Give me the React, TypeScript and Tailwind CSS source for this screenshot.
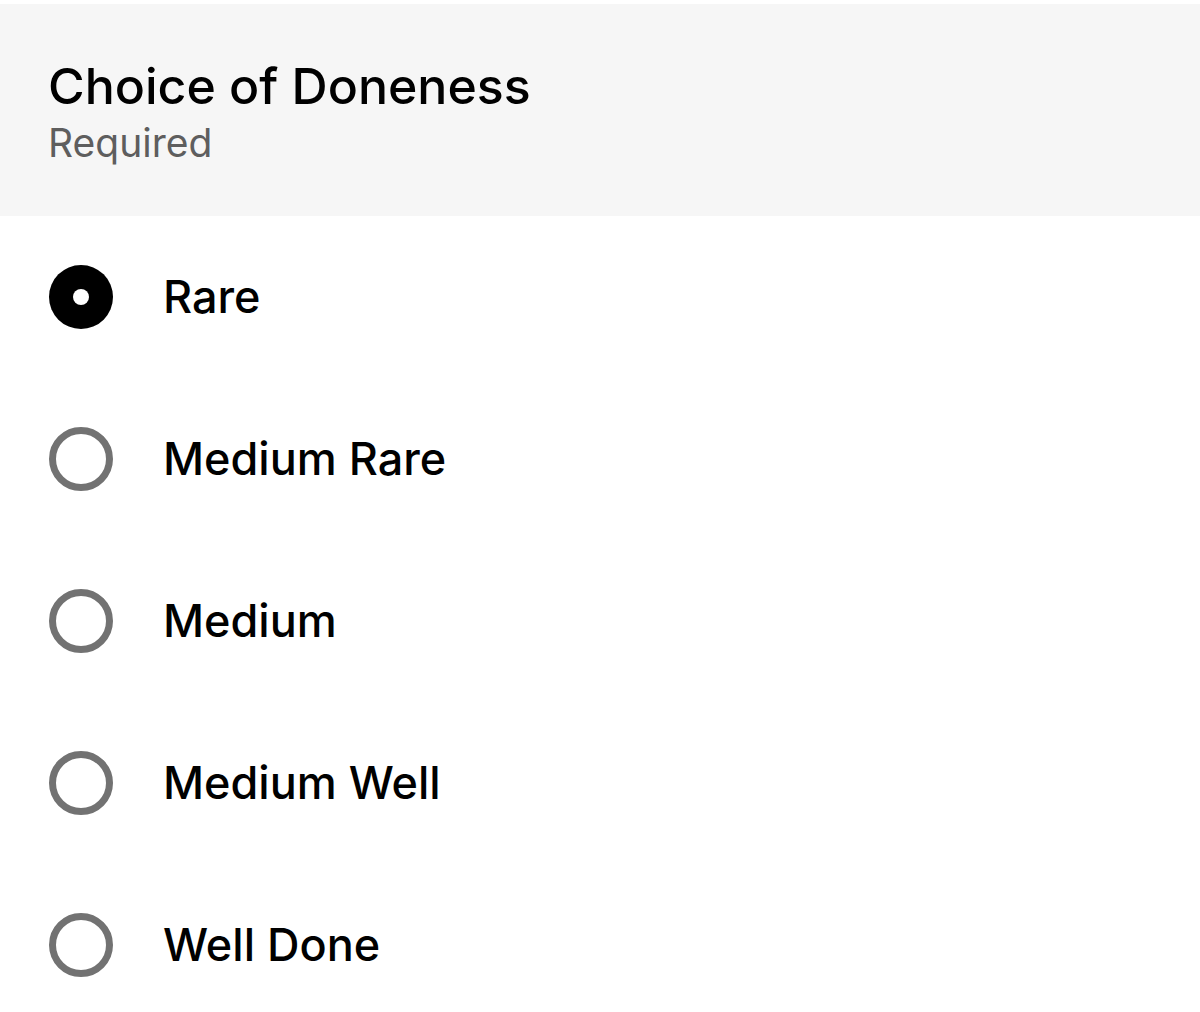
import React from "react";

const options = ["Rare", "Medium Rare", "Medium", "Medium Well", "Well Done"];

export default function App() {
  return (
    <div className="w-[1200px] h-[1012px] bg-white overflow-hidden pt-[4px]" style={{ fontFamily: "Inter, 'Noto Sans', sans-serif" }}>
      <div className="h-[212px] bg-[#f6f6f6] pl-[48px] pt-[53px]">
        <div className="text-[50px] leading-[58px] font-medium text-black">Choice of Doneness</div>
        <div className="text-[39px] leading-[46px] text-[#5e5e5e] mt-[5px]">Required</div>
      </div>
      <div className="flex flex-col">
        {options.map((o, i) => (
          <div key={o} className="flex items-center h-[162px] shrink-0 pl-[49px]">
            {i === 0 ? (
              <div className="w-[64px] h-[64px] rounded-full bg-black flex items-center justify-center shrink-0">
                <div className="w-[16px] h-[16px] rounded-full bg-white" />
              </div>
            ) : (
              <div className="w-[64px] h-[64px] rounded-full border-[7px] border-[#727272] shrink-0" />
            )}
            <div className="ml-[50px] text-[45px] leading-[54px] font-medium text-black">{o}</div>
          </div>
        ))}
      </div>
    </div>
  );
}
